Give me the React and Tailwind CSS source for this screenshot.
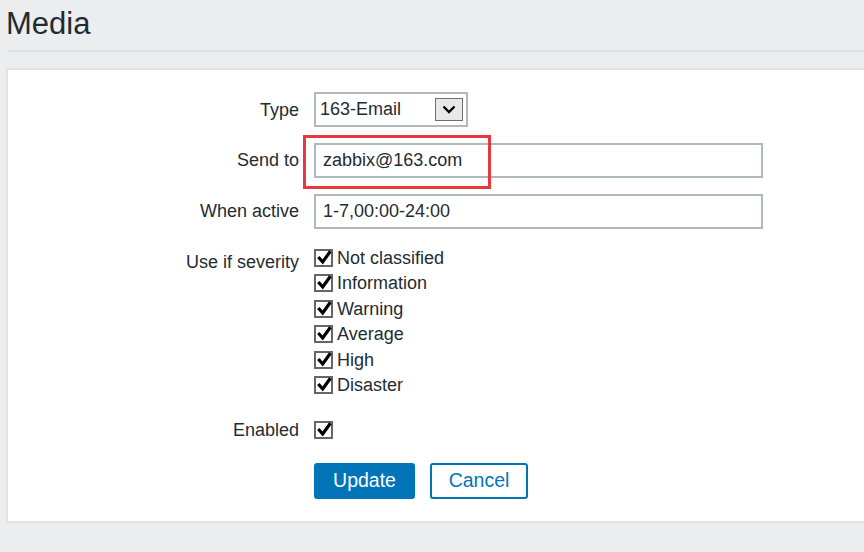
import React from "react";

const font = { fontFamily: '"Liberation Sans", Arial, sans-serif' };

function Check() {
  return (
    <span className="relative inline-block w-[19px] h-[18px] border-2 border-[#666] bg-white shrink-0">
      <svg className="absolute -left-[2px] -top-[2px]" width="19" height="18" viewBox="0 0 19 18">
        <polyline points="4.3,8 8.7,13 16.4,2.2" fill="none" stroke="#000" strokeWidth="3.2" />
      </svg>
    </span>
  );
}

const severities = ["Not classified", "Information", "Warning", "Average", "High", "Disaster"];

export default function App() {
  return (
    <div className="min-h-screen bg-[#ebedef] text-[#1f2c33]" style={font}>
      {/* Header */}
      <div className="h-[50px] pl-[6px] pt-[8px]">
        <h1 className="text-[31px] leading-none">Media</h1>
      </div>
      <div className="ml-[8px] h-[2px] bg-[#dcdfe1]" />

      {/* Form panel */}
      <div className="mt-[16px] ml-[6px] border-l-2 border-t-2 border-b-2 border-[#dfe1e3] bg-white pt-[22px] pb-[22px] text-[18px]">
        <div className="grid grid-cols-[291px_1fr] gap-x-[15px]">
          {/* Type */}
          <div className="text-right leading-[37px] h-[35px]">Type</div>
          <div className="flex items-center justify-between w-[154px] h-[35px] border-2 border-[#b0b9b9] pl-[4px] pr-[3px] leading-[31px]">
            <span>163-Email</span>
            <span className="flex items-center justify-center w-[28px] h-[23px] border border-[#6f6f6f] bg-[#e8e8e8]">
              <svg width="14" height="9" viewBox="0 0 14 9">
                <polyline points="1.5,1.5 7,7 12.5,1.5" fill="none" stroke="#000" strokeWidth="2.4" />
              </svg>
            </span>
          </div>

          {/* Send to */}
          <div className="mt-[16px] text-right leading-[35px]">Send to</div>
          <div className="mt-[16px] relative w-[449px]">
            <div className="h-[35px] border-2 border-[#b0b9b9] pl-[7px] leading-[31px]">zabbix@163.com</div>
            <div className="absolute -left-[11px] -top-[8px] w-[188px] h-[54px] border-[3px] border-[#e8383d] pointer-events-none" />
          </div>

          {/* When active */}
          <div className="mt-[16px] text-right leading-[35px]">When active</div>
          <div className="mt-[16px] w-[449px] h-[35px] border-2 border-[#b0b9b9] pl-[7px] leading-[31px]">1-7,00:00-24:00</div>

          {/* Severity */}
          <div className="mt-[24px] text-right leading-[18px]">Use if severity</div>
          <div className="mt-[20px] flex flex-col">
            {severities.map((s) => (
              <div key={s} className="flex items-start gap-[4px] h-[25.4px]">
                <Check />
                <span className="leading-[18px]">{s}</span>
              </div>
            ))}
          </div>

          {/* Enabled */}
          <div className="mt-[19.6px] text-right leading-[18px]">Enabled</div>
          <div className="mt-[19.6px] flex h-[18px]">
            <Check />
          </div>

          {/* Buttons */}
          <div />
          <div className="mt-[24px] flex gap-[15px]">
            <button className="w-[101px] h-[36px] rounded-[3px] bg-[#0275b8] text-white text-[19.5px] leading-none">
              Update
            </button>
            <button className="w-[98px] h-[36px] rounded-[3px] border-2 border-[#0275b8] bg-white text-[#0275b8] text-[19.5px] leading-none">
              Cancel
            </button>
          </div>
        </div>
      </div>
    </div>
  );
}
